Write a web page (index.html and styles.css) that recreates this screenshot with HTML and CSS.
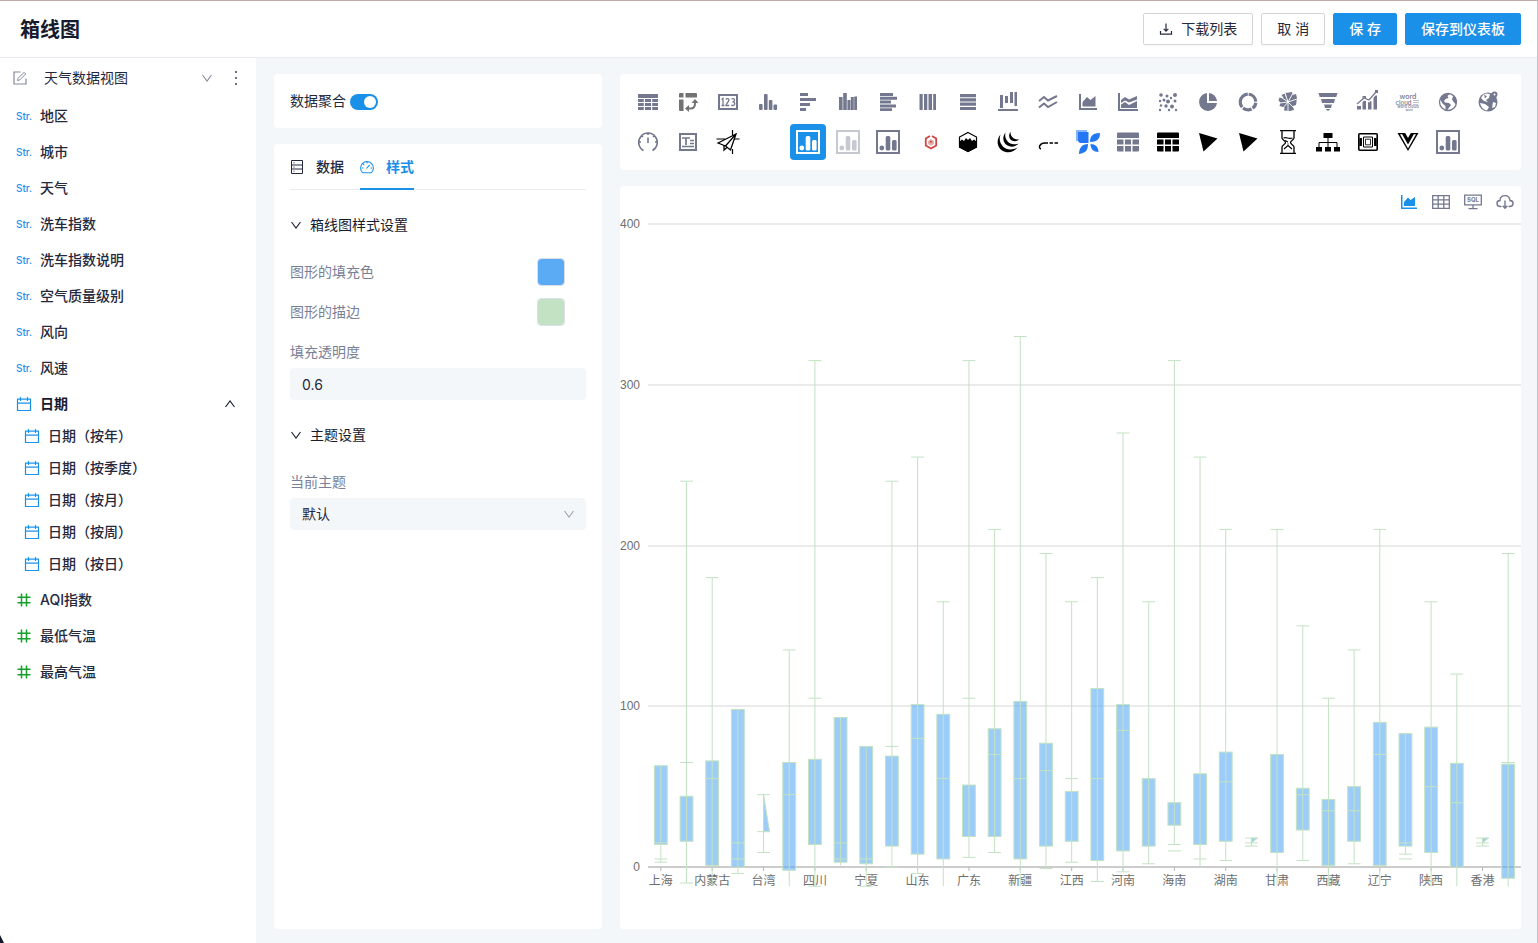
FILE: index.html
```html
<!DOCTYPE html>
<html lang="zh-CN">
<head>
<meta charset="utf-8">
<meta name="viewport" content="width=device-width, initial-scale=1">
<title>箱线图</title>
<link rel="stylesheet" href="styles.css">
</head>
<body>
<svg class="defs" aria-hidden="true">
  <symbol id="cal" viewBox="0 0 16 16"><path d="M1.500 3.200h13v11.300h-13zM1.500 7.200h13M4.500 1v4M11.500 1v4" fill="none" stroke="currentColor" stroke-width="1.200"/></symbol>
  <symbol id="hash" viewBox="0 0 16 16"><path d="M5.500 1.500v13M10.500 1.500v13M1.500 5.200h13M1.500 10.800h13" fill="none" stroke="currentColor" stroke-width="1.500"/></symbol>
  <symbol id="down" viewBox="0 0 12 12"><path d="M1.500 3L6 9l4.500-6" fill="none" stroke="currentColor" stroke-width="1.100"/></symbol>
  <symbol id="bars-box" viewBox="0 0 24 24"><path fill="none" stroke="currentColor" stroke-width="2" d="M1 1h22v22H1z"/><g fill="currentColor"><circle cx="5.800" cy="18" r="2.400"/><rect x="9.700" y="6" width="4.600" height="14.500" rx="1.500"/><rect x="16" y="10" width="4.600" height="10.500" rx="1.500"/></g></symbol>
  <symbol id="table-solid" viewBox="0 0 24 24"><path fill="currentColor" d="M2 2.500h20a1 1 0 0 1 1 1V8H1V3.500a1 1 0 0 1 1-1zM1 9.500h6.500v5H1zM9 9.500h6v5H9zM16.500 9.500H23v5h-6.500zM1 16h6.500v5.500H2a1 1 0 0 1-1-1zM9 16h6v5.500H9zM16.500 16H23v4.500a1 1 0 0 1-1 1h-5.500z"/></symbol>
  <symbol id="arrowhead" viewBox="0 0 24 24"><path fill="currentColor" d="M3 3l18.500 5.500L7.500 21.500z"/></symbol>
</svg>

<header class="topbar">
  <h1>箱线图</h1>
  <div class="actions">
    <button class="btn" type="button"><svg class="i14" viewBox="0 0 14 14"><path d="M7 1.500v7.500M4.700 6.800L7 9.200l2.300-2.400M1.500 9v3.200h11V9" fill="none" stroke="currentColor" stroke-width="1.200"/></svg>下载列表</button>
    <button class="btn" type="button">取 消</button>
    <button class="btn primary" type="button">保 存</button>
    <button class="btn primary" type="button">保存到仪表板</button>
  </div>
</header>

<div class="layout">
  <aside class="sidebar">
    <div class="view-row">
      <svg class="i14" viewBox="0 0 14 14"><path d="M7.500 1H1v12h12V7.500" fill="none" stroke="currentColor" stroke-width="1.200"/><path d="M4.500 9.500l.5-2.200L11 1.300l1.700 1.700-6 6z" fill="none" stroke="currentColor"/></svg>
      <span class="view-name">天气数据视图</span>
      <button class="plain" type="button" aria-label="展开"><svg class="i12"><use href="#down"/></svg></button>
      <button class="plain more" type="button" aria-label="更多"><svg class="i16" viewBox="0 0 16 16" fill="currentColor"><rect x="7" y="1" width="2" height="2"/><rect x="7" y="7" width="2" height="2"/><rect x="7" y="13" width="2" height="2"/></svg></button>
    </div>
    <ul class="fields">
      <li><span class="str">Str.</span>地区</li>
      <li><span class="str">Str.</span>城市</li>
      <li><span class="str">Str.</span>天气</li>
      <li><span class="str">Str.</span>洗车指数</li>
      <li><span class="str">Str.</span>洗车指数说明</li>
      <li><span class="str">Str.</span>空气质量级别</li>
      <li><span class="str">Str.</span>风向</li>
      <li><span class="str">Str.</span>风速</li>
      <li class="group">
        <div class="group-head"><svg class="i16 blue"><use href="#cal"/></svg>日期<svg class="i12 up"><use href="#down"/></svg></div>
        <ul class="subfields">
          <li><svg class="i16 blue"><use href="#cal"/></svg>日期（按年）</li>
          <li><svg class="i16 blue"><use href="#cal"/></svg>日期（按季度）</li>
          <li><svg class="i16 blue"><use href="#cal"/></svg>日期（按月）</li>
          <li><svg class="i16 blue"><use href="#cal"/></svg>日期（按周）</li>
          <li><svg class="i16 blue"><use href="#cal"/></svg>日期（按日）</li>
        </ul>
      </li>
      <li><svg class="i16 green"><use href="#hash"/></svg>AQI指数</li>
      <li><svg class="i16 green"><use href="#hash"/></svg>最低气温</li>
      <li><svg class="i16 green"><use href="#hash"/></svg>最高气温</li>
    </ul>
  </aside>

  <section class="settings">
    <div class="card aggregate">
      <label for="agg">数据聚合</label><input id="agg" class="switch" type="checkbox" role="switch" checked>
    </div>
    <div class="card style-panel">
      <div class="tabs" role="tablist">
        <button class="tab" role="tab" type="button" aria-selected="false"><svg class="i14" viewBox="0 0 14 14" fill="none" stroke="currentColor"><path d="M1.500.5h11v13h-11zM1.500 5h11M1.500 9h11M3.500 2.800h1M3.500 7h1M3.500 11.200h1"/></svg>数据</button>
        <button class="tab active" role="tab" type="button" aria-selected="true"><svg class="i14" viewBox="0 0 14 14" fill="none" stroke="currentColor"><path d="M2.800 12.800A6.400 6.400 0 1 1 11.200 12.800zM6.500 8.500l3.200-3.700M7 2v1.500M3.200 4l1 1M2 8h1.500M10.500 8H12" stroke-width="1.100"/></svg>样式</button>
      </div>
      <details open>
        <summary><svg class="i12"><use href="#down"/></svg>箱线图样式设置</summary>
        <div class="details-body">
          <div class="color-row"><label for="fill">图形的填充色</label><input id="fill" type="color" value="#5aabf4"></div>
          <div class="color-row"><label for="stroke">图形的描边</label><input id="stroke" type="color" value="#c3e2c3"></div>
          <div class="field"><label for="opacity">填充透明度</label><input id="opacity" class="control" type="text" value="0.6"></div>
        </div>
      </details>
      <details open>
        <summary><svg class="i12"><use href="#down"/></svg>主题设置</summary>
        <div class="details-body">
          <div class="field"><label for="theme">当前主题</label>
            <div class="select-wrap"><select id="theme" class="control"><option>默认</option></select><svg class="i12"><use href="#down"/></svg></div>
          </div>
        </div>
      </details>
    </div>
  </section>

  <main class="workspace">
    <div class="card picker">
      <button type="button" aria-label="表格"><svg viewBox="0 0 24 24" fill="currentColor"><path d="M2 4h20v4H2zM2 9h5.800v3H2zM9 9h6v3H9zM16.200 9H22v3h-5.800zM2 13h5.800v3H2zM9 13h6v3H9zM16.200 13H22v3h-5.800zM2 17h5.800v3H2zM9 17h6v3H9zM16.200 17H22v3h-5.800z"/></svg></button>
      <button type="button" aria-label="透视表"><svg class="gray" viewBox="0 0 24 24" fill="currentColor"><path d="M4 3h3.500v4.500H3V4a1 1 0 0 1 1-1zM9.500 3H20a1 1 0 0 1 1 1v3.500H9.500zM3 9.500h4.500V21H4a1 1 0 0 1-1-1z"/><path d="M12 18.500h2.500c3 0 4.500-1.500 4.500-5V12" fill="none" stroke="currentColor" stroke-width="2"/><path d="M15.500 13L19 9l3.500 4zM13 15v7l-4-3.500z"/></svg></button>
      <button type="button" aria-label="指标卡"><svg viewBox="0 0 24 24" fill="none" stroke="currentColor"><path d="M3 5h18v14H3z" stroke-width="2"/><path d="M5.500 9.500L7 8.500v7M5.500 15.500h3M10 9.500c.3-1.300 3-1.300 3 .5 0 1.700-3 3.500-3 5.500h3.200M15.500 9c1-.8 3-.6 3 1s-1 1.800-2 1.800c1.500 0 2.300.6 2.300 2s-2.400 2.200-3.400 1.200" stroke-width="1.300"/></svg></button>
      <button type="button" aria-label="柱状图"><svg viewBox="0 0 24 24" fill="currentColor"><rect x="3" y="14" width="3.600" height="6" rx="1"/><rect x="8" y="4" width="3.600" height="16" rx="1"/><rect x="12.800" y="10" width="3.600" height="10" rx="1"/><rect x="17.500" y="14.500" width="3.600" height="5.500" rx="1"/></svg></button>
      <button type="button" aria-label="条形图"><svg viewBox="0 0 24 24" fill="currentColor"><path d="M4 3h8v3H4zM4 8h16v3H4zM4 13h10v3H4zM4 18h6v3H4z"/></svg></button>
      <button type="button" aria-label="分组柱状图"><svg viewBox="0 0 24 24" fill="currentColor"><path d="M3 7h3.600v13H3zM7.200 3h3.600v17H7.200zM11.400 10h3v10h-3zM14.800 7h3v13h-3zM18.200 6.500H21V20h-2.800z"/></svg></button>
      <button type="button" aria-label="分组条形图"><svg viewBox="0 0 24 24" fill="currentColor"><path d="M4 3h13v3H4zM4 6.800h17v3H4zM4 10.600h11v3H4zM4 14.400h16v3H4zM4 18.200h12V21H4z"/></svg></button>
      <button type="button" aria-label="堆叠柱状图"><svg viewBox="0 0 24 24" fill="currentColor"><path d="M3.500 4h3.200v16H3.500zM8 4h3.300v16H8zM12.500 4H16v16h-3.500zM17.200 4H20v16h-2.800z"/></svg></button>
      <button type="button" aria-label="堆叠条形图"><svg viewBox="0 0 24 24" fill="currentColor"><path d="M4 4h16v3.200H4zM4 8.300h16v3.200H4zM4 12.600h16v3.200H4zM4 17h16v3H4z"/></svg></button>
      <button type="button" aria-label="瀑布图"><svg viewBox="0 0 24 24" fill="currentColor"><path d="M4 5h3v13H4zM9 6h3v7H9zM14 2h3v11h-3zM18.500 2H21v14h-2.500zM2 19h20v2H2z"/></svg></button>
      <button type="button" aria-label="折线图"><svg viewBox="0 0 24 24" fill="none" stroke="currentColor" stroke-width="2"><path d="M3 11l5-4 4 3.500L21 6M3 17.500l5-4 4 3.500 9-5"/></svg></button>
      <button type="button" aria-label="面积图"><svg viewBox="0 0 24 24" fill="currentColor"><path d="M3 4h2v14h16v2H3z"/><path d="M6.500 16.500V12L11 7l3.500 3L19.500 6v10.500z"/></svg></button>
      <button type="button" aria-label="堆叠面积图"><svg viewBox="0 0 24 24" fill="currentColor"><path d="M2 3h2v16h18v2H2z"/><path d="M5 13V10l4-3 4 2.500L21 6v3.500l-8 3L9 10.500z"/><path d="M5 18v-3.500l4-2.500 4 3 8-4v7z"/></svg></button>
      <button type="button" aria-label="散点图"><svg viewBox="0 0 24 24" fill="currentColor"><circle cx="5" cy="5" r="1.800"/><circle cx="11" cy="6" r="1.500"/><circle cx="19" cy="5" r="2"/><circle cx="15" cy="8" r="1.200"/><circle cx="4" cy="11" r="1.200"/><circle cx="8" cy="10" r="1.500"/><circle cx="12" cy="11.500" r="2"/><circle cx="19" cy="11" r="1.500"/><circle cx="5" cy="15.500" r="1.200"/><circle cx="10" cy="16" r="1.700"/><circle cx="16" cy="16.500" r="2"/><circle cx="4" cy="20" r="1.200"/><circle cx="13" cy="20" r="1.200"/><circle cx="20" cy="20" r="1.200"/></svg></button>
      <button type="button" aria-label="饼图"><svg viewBox="0 0 24 24" fill="currentColor"><path d="M11 3v10h10a9 9 0 1 1-10-10z"/><path d="M13 3a9 9 0 0 1 8 8h-8z"/></svg></button>
      <button type="button" aria-label="环形图"><svg viewBox="0 0 24 24" fill="none"><circle cx="12" cy="12" r="7.800" stroke="currentColor" stroke-width="3.200" stroke-dasharray="11 1.250 6.500 1.250 9 1.250 17.500 1.250" transform="rotate(-85 12 12)"/></svg></button>
      <button type="button" aria-label="玫瑰图"><svg viewBox="0 0 24 24"><path fill="currentColor" d="M12 12L9 3l7-1 .5 3 3.500-1 1 4-1 7-3 1 1 4-4 1-6-.5.500-3-5-1.500 1-3.500-2-2 1-3 4 .5-2-3 3-1.500z"/><path d="M12 12L9 3M12 12l4.500-8M12 12l9-3M12 12l6 6M12 12v9M12 12l-5 6M12 12l-8 1M12 12L4 6.500" stroke="#fff" stroke-width=".9"/></svg></button>
      <button type="button" aria-label="漏斗图"><svg viewBox="0 0 24 24" fill="currentColor"><path d="M2.500 3h19l-1.200 4H3.700zM5 9h14l-1 4H6zM8 14.500h8L15 18H9zM9.500 19h5L12 21z"/></svg></button>
      <button type="button" aria-label="组合图"><svg viewBox="0 0 24 24" fill="currentColor"><path d="M1 16h4v3.500H1zM6.500 6H10v13.500H6.500zM12 11h3.500v8.500H12zM17.500 5.500H21v14h-3.500z"/><path d="M1 15l7-6 5 2 7-8" fill="none" stroke="#fff" stroke-width="2.500"/><path d="M1 14l7-6 5 2 7-8" fill="none" stroke="currentColor" stroke-width="1.200"/><path d="M19 0h3v3h-3z"/></svg></button>
      <button type="button" aria-label="词云"><svg viewBox="0 0 24 24" fill="currentColor" class="word"><text x="12" y="9" text-anchor="middle" font-size="7">word</text><text x="7.500" y="14.500" text-anchor="middle" font-size="6">cloud</text><path d="M17 10h6v1h-6zM17 12h6v1h-6zM17 14h5v1h-5z" opacity=".45"/><text x="12" y="17.500" text-anchor="middle" font-size="4">word cloud</text><text x="13" y="20.500" text-anchor="middle" font-size="3">word</text></svg></button>
      <button type="button" aria-label="轮廓地图"><svg viewBox="0 0 24 24"><circle cx="12" cy="12" r="8.500" fill="none" stroke="currentColor" stroke-width="1.300"/><path fill="currentColor" d="M4 9l3-4 5-2 1.500 1-2 2 1 2-3 1-1.500 2 1 1.500 4 .5 2 2-3 4-1 2-1.500-2v-3l-3-2.500zM17 6l2.500 1 1.500 4-1 3.500-2-2-2-3z"/></svg></button>
      <button type="button" aria-label="散点地图"><svg viewBox="0 0 24 24"><circle cx="12" cy="12" r="9.500" fill="currentColor"/><path fill="#fff" d="M10 3.500l4 .5-1 4-3 2 2 2-4-1-3-3 2-3zM4 13l5 1 4 3-2 3.500c-3-.5-6-3-7-7.500zM17 12l3 1-1 4-3 1z"/><path fill="currentColor" d="M8 5l3 1-2 2.500zM15.500 4.500a3 3 0 0 1 6 0c0 2-3 5-3 5s-3-3-3-5z"/><circle cx="18.500" cy="4.500" r="1" fill="#fff"/></svg></button>
      <button type="button" aria-label="仪表盘"><svg viewBox="0 0 24 24" fill="none" stroke="currentColor" stroke-width="1.600"><path d="M7.500 20.500a9.300 9.300 0 1 1 9 0M12 7.500v5.500M12 3v2M3 12h2M19 12h2M5.500 5.500L7 7M18.500 5.500L17 7"/></svg></button>
      <button type="button" aria-label="富文本"><svg viewBox="0 0 24 24" fill="none" stroke="currentColor" stroke-width="2"><path d="M4 4h16v16H4z"/><path d="M6 8h8M10 8v7M6 16.500h12M14 10.500h4M14 13.500h4" stroke-width="1.700"/></svg></button>
      <button type="button" aria-label="纸飞机"><svg class="black" viewBox="0 0 24 24" fill="none" stroke="currentColor"><path d="M2 13L20 4l-5.500 16-5-4zM20 4L9.500 16M8 15.500V20l3-2.500" stroke-width="1.300"/><path d="M.5 9H9M16.500 0v5M18 9h5.500M16.500 19v5" stroke-width="1.200"/></svg></button>
      <span class="blank"></span>
      <button class="selected" type="button" aria-label="箱线图"><svg><use href="#bars-box"/></svg></button>
      <button class="muted" type="button" aria-label="图表"><svg><use href="#bars-box"/></svg></button>
      <button type="button" aria-label="图表"><svg><use href="#bars-box"/></svg></button>
      <button type="button" aria-label="六边形"><svg viewBox="0 0 24 24" fill="none"><path d="M14 6L9.800 8.500v7l5.200 3 5.200-3v-7L16 6" stroke="#d0453f" stroke-width="1.800"/><path d="M15 9l3 2v3l-3 1.700-3-1.700v-3z" fill="#e4b0ab"/><path d="M15 10.500l1.500 2h-3z" fill="#b83a35"/></svg></button>
      <button type="button" aria-label="山形"><svg class="black" viewBox="0 0 24 24"><path d="M12 2.500L20.500 7v10L12 21.500 3.500 17V7z" fill="none" stroke="currentColor" stroke-width="1.200"/><path d="M3 12l3-2.500 2 1.500 2-3 2 2 2-2 2 3 2-1.500 3 2.500v5.500L12 22l-9-4.500z" fill="currentColor"/></svg></button>
      <button type="button" aria-label="波纹"><svg class="black" viewBox="0 0 24 24" fill="currentColor"><path d="M4.500 4.500C0 10 1 17 6 20.500c5 3.300 12 2 15.500-3C15 21 9.500 19.500 6.500 16 3.500 12.500 3 8.500 4.500 4.500z"/><path d="M9.500 2.500C6 7 6.800 12.500 11 15.300c4 2.500 9 1.500 11.500-1.800-5 1.700-8.500.5-10.800-2C9.500 9 8.700 6 9.500 2.500z"/><path d="M14.500 1.500c-2.300 3.500-1.500 7 1 8.800 2.500 1.700 5.500 1.200 7.500-1-3 .5-5-.3-6.500-2-1.500-1.600-2.200-3.500-2-5.800z"/></svg></button>
      <button type="button" aria-label="虚线"><svg class="black" viewBox="0 0 24 24" fill="none" stroke="currentColor" stroke-width="1.500"><path d="M5 19c-3-1-1.500-6 4-6h3M13.500 13H17M18.500 13H22"/></svg></button>
      <button type="button" aria-label="花瓣"><svg viewBox="0 0 24 24" fill="#2377f5"><path d="M0 0h11v11H0z" opacity=".55"/><path d="M2 2h10.500v11H5a3 3 0 0 1-3-3zM14 12c0-6 3-9 10-9 0 6-3 9-10 9zM12 14c0 6-2 9-9 10 0-6 3-10 9-10zM14.500 14c5 0 8 3 8 8-5 0-8-3-8-8z"/></svg></button>
      <button type="button" aria-label="明细表"><svg><use href="#table-solid"/></svg></button>
      <button type="button" aria-label="明细表"><svg class="black"><use href="#table-solid"/></svg></button>
      <button type="button" aria-label="箭头"><svg class="black"><use href="#arrowhead"/></svg></button>
      <button type="button" aria-label="箭头"><svg class="black"><use href="#arrowhead"/></svg></button>
      <button type="button" aria-label="沙漏"><svg class="black" viewBox="0 0 24 24" fill="none" stroke="currentColor" stroke-width="1.300"><path d="M4 .7h16M4 23.300h16M6 1v7c0 2 3.500 2.500 3.500 4.500S6 15 6 17v6M18 1v7c0 2-3.500 2.500-3.500 4.500S18 15 18 17v6"/><path d="M7.500 8c3-1.500 5 1.500 9 0M8 19l4-3.500 4 3.500M9 10.500l3 1.500M12 13.500v1" stroke-width="1.100"/></svg></button>
      <button type="button" aria-label="组织图"><svg class="black" viewBox="0 0 24 24"><path d="M7.500 3h9v5h-9zM0 17h6v4.500H0zM9 17h6v4.500H9zM18 17h6v4.500h-6z" fill="currentColor"/><path d="M12 8v9M3 17v-4.500h18V17" fill="none" stroke="currentColor" stroke-width="1"/></svg></button>
      <button type="button" aria-label="轮播"><svg class="black" viewBox="0 0 24 24" fill="none" stroke="currentColor"><rect x="2.800" y="3.800" width="18.400" height="16.400" rx="1" stroke-width="1.600"/><path d="M7.500 7h9v10h-9z" stroke-width="1"/><path d="M9.500 9.200h5v5.600h-5z" stroke-width=".8"/><path d="M4.700 8v8M19.300 8v8" stroke-width="2.500"/></svg></button>
      <button type="button" aria-label="V 形"><svg class="black" viewBox="0 0 24 24"><path d="M1.500 3h21L12 21z" fill="currentColor"/><path d="M4 4.300h2.200L12 14.500l5.800-10.200H20L12 18.500z" fill="#fff"/><path d="M9.200 3L12 8l2.800-5z" fill="#fff"/></svg></button>
      <button type="button" aria-label="图表"><svg><use href="#bars-box"/></svg></button>
    </div>

    <div class="card chart-card">
      <div class="chart-tools">
        <button class="on" type="button" aria-label="图表"><svg viewBox="0 0 16 16" fill="currentColor"><path d="M0 1h1.500v12.500H16V15H0z"/><path d="M3 12V8l4-4.500L9.500 6 14 3v9z"/></svg></button>
        <button type="button" aria-label="数据"><svg class="wide" viewBox="0 0 18 16" fill="none" stroke="currentColor" stroke-width="1.300"><path d="M.7 1.700h16.600v12.600H.7zM.7 5.900h16.600M.7 10.100h16.600M6.200 1.700v12.600M11.800 1.700v12.600"/></svg></button>
        <button type="button" aria-label="SQL"><svg class="wide" viewBox="0 0 18 16" fill="none" stroke="currentColor" stroke-width="1.300"><path d="M.7 1.200h16.600v9.600H.7zM9 10.800v3.700M4.500 14.700h9"/><text x="9" y="8" text-anchor="middle">SQL</text></svg></button>
        <button type="button" aria-label="下载"><svg class="wide" viewBox="0 0 18 16" fill="none" stroke="currentColor" stroke-width="1.400"><path d="M5.500 12.500H4.500C0 12.500-.2 6.800 4 6.500 4 0 13.500 0 14 6.500c4.200.3 4 6-.5 6h-1M9 6.500v7.500M6.700 11.800L9 14.200l2.300-2.400"/></svg></button>
      </div>
      <div class="plot" id="plot"></div>
    </div>
  </main>
</div>
<script src="chart.js"></script>
</body>
</html>
```
FILE: styles.css
```css
* { box-sizing: border-box; }
body {
  position: relative;
  display: flex;
  flex-direction: column;
  min-height: 100vh;
  margin: 0;
  border-top: 1px solid #bfa9a8;
  border-right: 1px solid #c3c7cb;
  background: #f3f7fa;
  color: #25293d;
  font: 14px/22px Inter, "Noto Sans CJK SC", sans-serif;
}
body::after {
  content: "";
  position: absolute;
  left: 0;
  bottom: 0;
  border-left: 4px solid #111827;
  border-top: 8px solid transparent;
}
button, input, select { font: inherit; color: inherit; }
button { cursor: pointer; }
ul { margin: 0; padding: 0; list-style: none; }
svg { flex: none; display: block; }
.defs { position: absolute; width: 0; height: 0; }
.i12 { width: 12px; height: 12px; }
.i14 { width: 14px; height: 14px; }
.i16 { width: 16px; height: 16px; }
.blue { color: #1b93ec; }
.green { color: #169f2c; }

.topbar {
  display: flex;
  align-items: center;
  justify-content: space-between;
  height: 57px;
  padding: 0 16px 0 20px;
  border-bottom: 1px solid #e8ecf0;
  background: #fff;
}
h1 { margin: 0; padding-top: 2px; color: #171b2e; font-size: 20px; line-height: 28px; font-weight: 600; }
.actions { display: flex; gap: 8px; }
.btn {
  display: flex;
  align-items: center;
  gap: 8px;
  height: 32px;
  padding: 0 15px;
  border: 1px solid #d3d5d9;
  border-radius: 2px;
  background: #fff;
  box-shadow: 0 2px 0 rgba(0, 0, 0, .02);
}
.btn.primary { border-color: #1b90e8; background: #1b90e8; color: #fff; font-weight: 500; }

.layout { display: flex; flex: 1; }
.sidebar { flex: none; width: 256px; background: #fff; }
.view-row { display: flex; align-items: center; height: 40px; padding: 0 12px 0 13px; color: #85899d; }
.view-name { flex: 1; margin-left: 17px; color: #25293d; }
.plain { display: flex; padding: 0; border: 0; background: none; }
.more { margin-left: 15px; color: #6b6f82; }
.fields { display: flex; flex-direction: column; gap: 4px; margin-top: 2px; font-weight: 500; }
.fields > li:not(.group), .group-head { display: flex; align-items: center; gap: 8px; height: 32px; padding: 0 20px 0 16px; }
.str { width: 16px; color: #1b93ec; font-size: 10px; font-weight: 500; }
.group-head { color: #171b2e; font-weight: 600; }
.up { margin-left: auto; transform: rotate(180deg); }
.subfields li { display: flex; align-items: center; gap: 8px; height: 32px; padding-left: 24px; }

.settings { display: flex; flex: none; flex-direction: column; gap: 16px; width: 328px; margin: 16px 18px 14px; }
.card { border-radius: 4px; background: #fff; }
.aggregate { display: flex; align-items: center; gap: 4px; height: 54px; padding: 0 16px; }
.switch { position: relative; appearance: none; width: 28px; height: 16px; margin: 2px 0 0; border-radius: 8px; background: #1b90e8; }
.switch::after { content: ""; position: absolute; top: 2px; right: 2px; width: 12px; height: 12px; border-radius: 50%; background: #fff; }
.style-panel { flex: 1; padding: 0 16px; }
.tabs { display: flex; gap: 16px; height: 46px; border-bottom: 1px solid #e9ebef; }
.tab { display: flex; align-items: center; gap: 12px; height: 46px; padding: 2px 0 0; border: 0; border-bottom: 2px solid transparent; background: none; font-weight: 500; }
.tab.active { border-color: #1b90e8; color: #1b90e8; font-weight: 700; }
details { margin-top: 24px; }
summary { display: flex; align-items: center; gap: 8px; color: #171b2e; list-style: none; }
.details-body { padding-top: 16px; }
.details-body label { color: #7a7f96; }
.color-row { display: flex; align-items: center; justify-content: space-between; height: 40px; padding-right: 21px; }
input[type="color"] { width: 28px; height: 28px; padding: 0; border: 1px solid #dcdfe8; border-radius: 4px; background: none; appearance: none; }
input[type="color"]::-webkit-color-swatch-wrapper { padding: 0; }
input[type="color"]::-webkit-color-swatch { border: 0; border-radius: 3px; }
.field { display: flex; flex-direction: column; gap: 5px; padding-top: 9px; }
.control { width: 100%; height: 32px; padding: 0 12px; border: 0; border-radius: 4px; background: #f3f7fa; }
.select-wrap { position: relative; }
select { display: block; appearance: none; }
.select-wrap svg { position: absolute; top: 10px; right: 11px; color: #9fa3b3; pointer-events: none; }

.workspace { display: flex; flex: 1; flex-direction: column; gap: 16px; min-width: 0; margin: 16px 16px 14px 0; }
.picker { display: flex; flex-wrap: wrap; padding: 8px; color: #74788f; }
.picker button, .blank { display: flex; align-items: center; justify-content: center; width: 36px; height: 36px; margin: 2px; padding: 0; border: 0; border-radius: 4px; background: none; color: inherit; }
.picker svg { width: 24px; height: 24px; overflow: visible; }
.picker .selected { background: #1b90e8; color: #fff; }
.picker .muted { color: #c7c9d2; }
.picker .black { color: #000; }
.picker .gray { color: #737373; }
.word text { font-family: Inter, sans-serif; font-weight: 500; }
.chart-card { display: flex; flex: 1; flex-direction: column; }
.chart-tools { display: flex; justify-content: flex-end; height: 32px; color: #74788f; }
.chart-tools button { display: flex; align-items: center; justify-content: center; width: 32px; padding: 0; border: 0; background: none; color: inherit; }
.chart-tools svg { width: 16px; height: 16px; }
.chart-tools svg.wide { width: 18px; }
.chart-tools text { fill: currentColor; stroke: none; font: 700 6px Inter, sans-serif; }
.chart-tools .on { color: #1b90e8; }
.plot { flex: 1; min-height: 400px; overflow: hidden; }
.axis-text { fill: #6e6e6e; font: 12px "Liberation Sans", "Noto Sans CJK SC", sans-serif; }
.grid-line { stroke: #d6d6d6; }
.axis-line { stroke: #cccccc; stroke-width: 2; }
.tick { stroke: #b5b5b5; }
.box { fill: #5aabf4; fill-opacity: .6; stroke: #c3e2c3; }
.whisker { fill: none; stroke: #c3e2c3; }
```
FILE: chart.js
```js
// Each row: label, box [low, high], cross lines, stem [low, high], optional wedge.
const rows = [
  ['上海', [14, 63], [15, 5, 3], [3, 63]],
  ['', [16, 44], [240, 65, -10], [-10, 240]],
  ['内蒙古', [1, 66], [180, 55], [-12, 180]],
  ['', [0, 98], [15, 5, -4], [-4, 98]],
  ['台湾', null, [45, 22, 9], [9, 45], [[0, 45], [6, 22], [0, 22]]],
  ['', [-2, 65], [135, 45], [-12, 135]],
  ['四川', [14, 67], [315, 105, -12], [-12, 315]],
  ['', [3, 93], [15, 5], [1, 93]],
  ['宁夏', [2, 75], [5, -12], [-12, 75]],
  ['', [13, 69], [240, 75, 0], [0, 240]],
  ['山东', [8, 101], [255, 80, -4], [-4, 255]],
  ['', [5, 95], [165, 55], [-12, 165]],
  ['广东', [19, 51], [315, 105, 6], [6, 315]],
  ['', [19, 86], [210, 70, 9], [9, 210]],
  ['新疆', [5, 103], [330, 55], [-12, 330]],
  ['', [13, 77], [195, 60, -1], [-1, 195]],
  ['江西', [16, 47], [165, 55, 3], [3, 165]],
  ['', [4, 111], [180, 55, -9], [-9, 180]],
  ['河南', [10, 101], [270, 85, -3], [-3, 270]],
  ['', [13, 55], [165, 2], [2, 165]],
  ['海南', [26, 40], [315, 14, 10], [14, 315]],
  ['', [14, 58], [255, 5], [0, 255]],
  ['湖南', [16, 71.5], [210, 53, 4], [4, 210]],
  ['', null, [18, 15, 13], [13, 18], [[0, 18], [6, 18], [0, 15]]],
  ['甘肃', [9, 70], [210, 70], [-12, 210]],
  ['', [23, 49], [150, 45, 4], [4, 150]],
  ['西藏', [1, 42], [105, 35], [-12, 105]],
  ['', [16, 50], [135, 35, 2], [2, 135]],
  ['辽宁', [1, 90], [210, 70], [-12, 210]],
  ['', [13, 83], [15, 8, 5], [8, 83]],
  ['陕西', [9, 87], [165, 50, -9], [-12, 165]],
  ['', [0, 64.5], [120, 40], [-12, 120]],
  ['香港', null, [18, 15, 13], [13, 18], [[0, 18], [6, 18], [0, 15]]],
  ['', [-7, 64], [195, 65], [-12, 195]]
];
const host = document.getElementById('plot');

function draw() {
  const w = host.clientWidth, h = host.clientHeight;
  const left = 28, top = 6, base = h - 62;
  const y = v => base - v * (base - top) / 400;
  const step = (w - left) / rows.length;
  const half = step / 4;
  let out = '';
  for (let v = 0; v <= 400; v += 100) {
    const gy = Math.round(y(v));
    out += `<line class="${v ? 'grid-line' : 'axis-line'}" x1="${left}" x2="${w}" y1="${gy}" y2="${gy}"/>`;
    out += `<text class="axis-text" text-anchor="end" x="20" y="${gy + 4}">${v}</text>`;
  }
  rows.forEach((r, i) => {
    const x = left + step * (i + .5);
    if (!r[0]) return;
    out += `<line class="tick" x1="${x}" x2="${x}" y1="${base}" y2="${base + 4}"/>`;
    out += `<text class="axis-text" text-anchor="middle" x="${x}" y="${base + 18}">${r[0]}</text>`;
  });
  rows.forEach(([, box, lines, stem, wedge], i) => {
    const x = left + step * (i + .5);
    if (box) out += `<rect class="box" x="${x - half}" y="${y(box[1])}" width="${half * 2}" height="${y(box[0]) - y(box[1])}"/>`;
    if (wedge) out += `<polygon class="box" points="${wedge.map(p => (x + p[0]) + ',' + y(p[1])).join(' ')}"/>`;
    out += `<path class="whisker" d="M${x} ${y(stem[0])}V${y(stem[1])}` + lines.map(v => `M${x - half} ${y(v)}h${half * 2}`).join('') + '"/>';
  });
  host.innerHTML = `<svg width="${w}" height="${h}" viewBox="0 0 ${w} ${h}">${out}</svg>`;
}

draw();
window.addEventListener('resize', draw);
```
